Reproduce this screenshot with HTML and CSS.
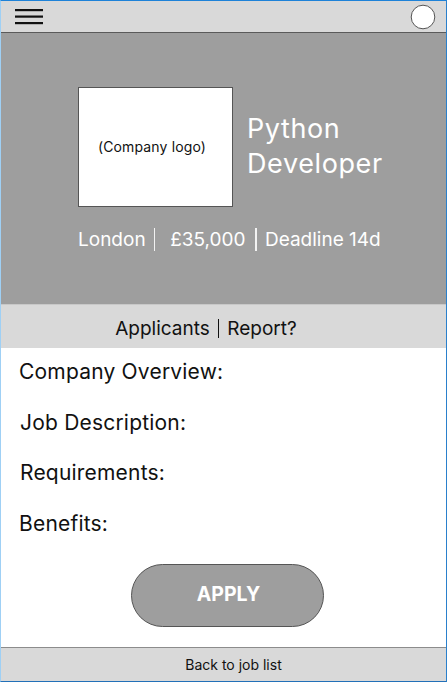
FILE: index.html
```html
<!DOCTYPE html>
<html lang="en">
<head>
<meta charset="utf-8">
<title>Python Developer</title>
<link rel="stylesheet" href="styles.css">
</head>
<body>
<div class="frame">
  <header class="topbar">
    <svg class="burger" width="28" height="16" viewBox="0 0 28 16" aria-hidden="true">
      <rect x="0" y="0" width="28" height="2.2" fill="#111"/>
      <rect x="0" y="6.5" width="28" height="2.2" fill="#111"/>
      <rect x="0" y="13" width="28" height="2.2" fill="#111"/>
    </svg>
    <svg class="avatar" width="26" height="26" viewBox="0 0 26 26" aria-hidden="true">
      <circle cx="13" cy="13" r="11.8" fill="#fff" stroke="#555" stroke-width="1"/>
    </svg>
  </header>

  <section class="hero">
    <div class="hero-top">
      <div class="logo">(Company logo)</div>
      <h1 class="title">Python<br>Developer</h1>
    </div>
    <p class="meta"><span>London</span><span class="sep s1"></span><span>£35,000</span><span class="sep s2"></span><span>Deadline 14d</span></p>
  </section>

  <nav class="tabs">
    <span>Applicants</span><span class="tsep"></span><span>Report?</span>
  </nav>

  <main class="content">
    <p class="field f1">Company Overview:</p>
    <p class="field">Job Description:</p>
    <p class="field">Requirements:</p>
    <p class="field f4">Benefits:</p>
    <div class="apply-row"><button class="apply">APPLY</button></div>
  </main>

  <footer class="bottombar">Back to job list</footer>
</div>
</body>
</html>
```

FILE: styles.css
```css
* { box-sizing: border-box; }
html, body { margin: 0; padding: 0; }
body {
  font-family: Inter, "Noto Sans", "Liberation Sans", sans-serif;
  background: #fff;
}
.frame {
  width: 447px;
  height: 682px;
  display: flex;
  flex-direction: column;
  border-style: solid;
  border-width: 1px;
  border-color: #1e82d8 #2a80cc #2270b8 #9fd0f5;
  overflow: hidden;
}
.topbar {
  height: 32px;
  flex: none;
  background: #d9d9d9;
  border-bottom: 1px solid #5a5a5a;
  display: flex;
  align-items: center;
  justify-content: space-between;
  padding: 0 10px 0 14px;
}
.burger { display: block; margin-top: 1px; }
.avatar { display: block; margin-top: 1px; }
.hero {
  height: 271px;
  flex: none;
  background: #9e9e9e;
  display: flex;
  flex-direction: column;
  align-items: flex-start;
  padding: 54px 0 0 77px;
}
.hero-top {
  display: flex;
  align-items: center;
  gap: 14px;
}
.logo {
  width: 155px;
  height: 120px;
  background: #fff;
  border: 1px solid #555;
  display: flex;
  align-items: center;
  justify-content: center;
  font-size: 14px;
  letter-spacing: 0.15px;
  color: #111;
  padding: 0 7px 1px 0;
}
.title {
  margin: -2px 0 0 0;
  font-weight: 400;
  font-size: 27px;
  letter-spacing: 0.6px;
  line-height: 35px;
  color: #fff;
}
.meta {
  margin: 21px 0 0 0;
  color: #fff;
  font-size: 19px;
  display: flex;
  align-items: center;
}
.sep {
  display: inline-block;
  width: 1.5px;
  height: 23px;
  background: #f2f2f2;
}
.s1 { margin: 0 15px 0 8px; }
.s2 { margin: 0 8px 0 10px; }
.tabs {
  height: 44px;
  flex: none;
  background: #d9d9d9;
  border-top: 1px solid #c8c8c8;
  display: flex;
  align-items: center;
  justify-content: center;
  font-size: 19px;
  color: #111;
  padding: 3px 35px 0 0;
}
.tsep {
  display: inline-block;
  width: 1.5px;
  height: 19px;
  background: #111;
  margin: 0 8px;
}
.content {
  flex: 1;
  background: #fff;
  padding: 10px 0 0 18px;
  display: flex;
  flex-direction: column;
}
.field {
  margin: 0;
  font-size: 21px;
  letter-spacing: 0.2px;
  line-height: 28px;
  height: 50.7px;
  color: #111;
  padding-left: 1px;
}
.f1 { padding-left: 0; }
.f4 { padding-left: 0; height: 54px; }
.apply-row {
  display: flex;
  justify-content: center;
  margin-left: -18px;
  width: 445px;
}
.apply {
  width: 193px;
  height: 63px;
  border-radius: 32px;
  background: #9e9e9e;
  border: 1px solid #555;
  color: #fff;
  font-family: inherit;
  font-weight: 700;
  font-size: 19.5px;
  margin-left: 7px;
  padding: 0 0 3px 3px;
}
.bottombar {
  height: 34px;
  flex: none;
  background: #d9d9d9;
  border-top: 1px solid #8c8c8c;
  display: flex;
  align-items: center;
  justify-content: center;
  font-size: 14px;
  color: #111;
  padding-left: 20px;
}
```
